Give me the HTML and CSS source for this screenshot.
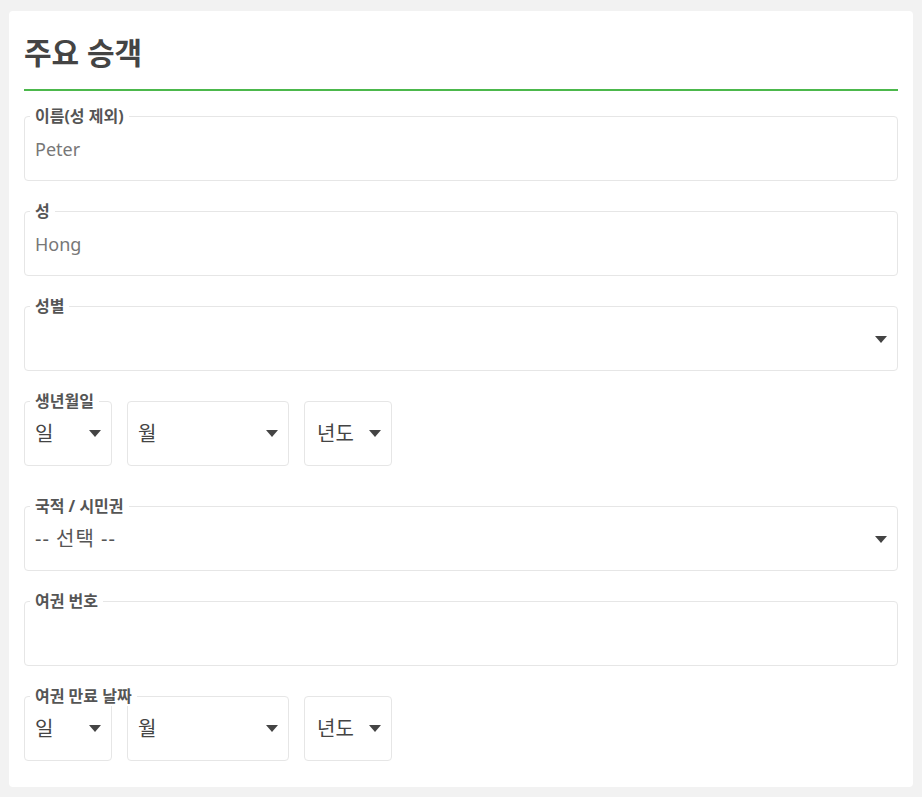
FILE: index.html
```html
<!DOCTYPE html>
<html lang="ko">
<head>
    <meta charset="utf-8">
    <title>주요 승객</title>
    <link rel="stylesheet" href="styles.css">
</head>
<body>
    <div class="card">
        <h1>주요 승객</h1>

        <fieldset class="box">
            <legend>이름(성 제외)</legend>
            <div class="value">Peter</div>
        </fieldset>

        <fieldset class="box">
            <legend>성</legend>
            <div class="value">Hong</div>
        </fieldset>

        <fieldset class="box">
            <legend>성별</legend>
            <div class="value select"><span></span><i class="caret"></i></div>
        </fieldset>

        <div class="group">
            <span class="group-label">생년월일</span>
            <div class="row">
                <div class="pick day"><span>일</span><i class="caret"></i></div>
                <div class="pick month"><span>월</span><i class="caret"></i></div>
                <div class="pick year"><span>년도</span><i class="caret"></i></div>
            </div>
        </div>

        <fieldset class="box">
            <legend>국적 / 시민권</legend>
            <div class="value select"><span class="dark">-- 선택 --</span><i class="caret"></i></div>
        </fieldset>

        <fieldset class="box">
            <legend>여권 번호</legend>
            <div class="value"></div>
        </fieldset>

        <div class="group last">
            <span class="group-label">여권 만료 날짜</span>
            <div class="row">
                <div class="pick day"><span>일</span><i class="caret"></i></div>
                <div class="pick month"><span>월</span><i class="caret"></i></div>
                <div class="pick year"><span>년도</span><i class="caret"></i></div>
            </div>
        </div>
    </div>
</body>
</html>
```

FILE: styles.css
```css
* {
    margin: 0;
    padding: 0;
    box-sizing: border-box;
}
body {
    background: #f2f2f2;
    font-family: "Noto Sans", "Noto Sans CJK KR", sans-serif;
    color: #444;
    padding: 11px 9px;
}
.card {
    background: #fff;
    border-radius: 4px;
    padding: 22px 15px 26px;
}
h1 {
    font-size: 30px;
    font-weight: 700;
    color: #444;
    line-height: 40px;
    padding-bottom: 16px;
    border-bottom: 2px solid #4cb84c;
    margin-bottom: 15px;
}
.box {
    border: 1px solid #e6e6e6;
    border-radius: 4px;
    height: 75px;
    padding: 0 10px;
    margin-bottom: 20px;
}
legend {
    font-size: 16px;
    font-weight: 700;
    color: #555;
    padding: 0 5px;
    line-height: 20px;
    margin-left: -5px;
}
.value {
    font-size: 18px;
    color: #777;
    line-height: 46px;
    height: 46px;
}
.select {
    display: flex;
    align-items: center;
    justify-content: space-between;
}
.select .dark {
    color: #555;
    font-size: 20px;
    letter-spacing: 1px;
}
.caret {
    display: block;
    width: 0;
    height: 0;
    border-left: 6px solid transparent;
    border-right: 6px solid transparent;
    border-top: 7px solid #444;
}
.group {
    margin-bottom: 30px;
}
.group.last {
    margin-bottom: 0;
}
.group-label {
    display: block;
    width: max-content;
    position: relative;
    z-index: 1;
    background: #fff;
    font-size: 16px;
    font-weight: 700;
    color: #555;
    line-height: 20px;
    padding: 0 5px;
    margin-left: 6px;
    margin-bottom: -10px;
}
.row {
    display: flex;
    gap: 15px;
}
.pick {
    border: 1px solid #e6e6e6;
    border-radius: 4px;
    height: 65px;
    padding: 0 10px;
    display: flex;
    align-items: center;
    justify-content: space-between;
    font-size: 20px;
    color: #444;
}
.pick span {
    padding-bottom: 2px;
}
.day, .year {
    width: 88px;
}
.month {
    width: 162px;
}
.year {
    padding-left: 12px;
}
```
